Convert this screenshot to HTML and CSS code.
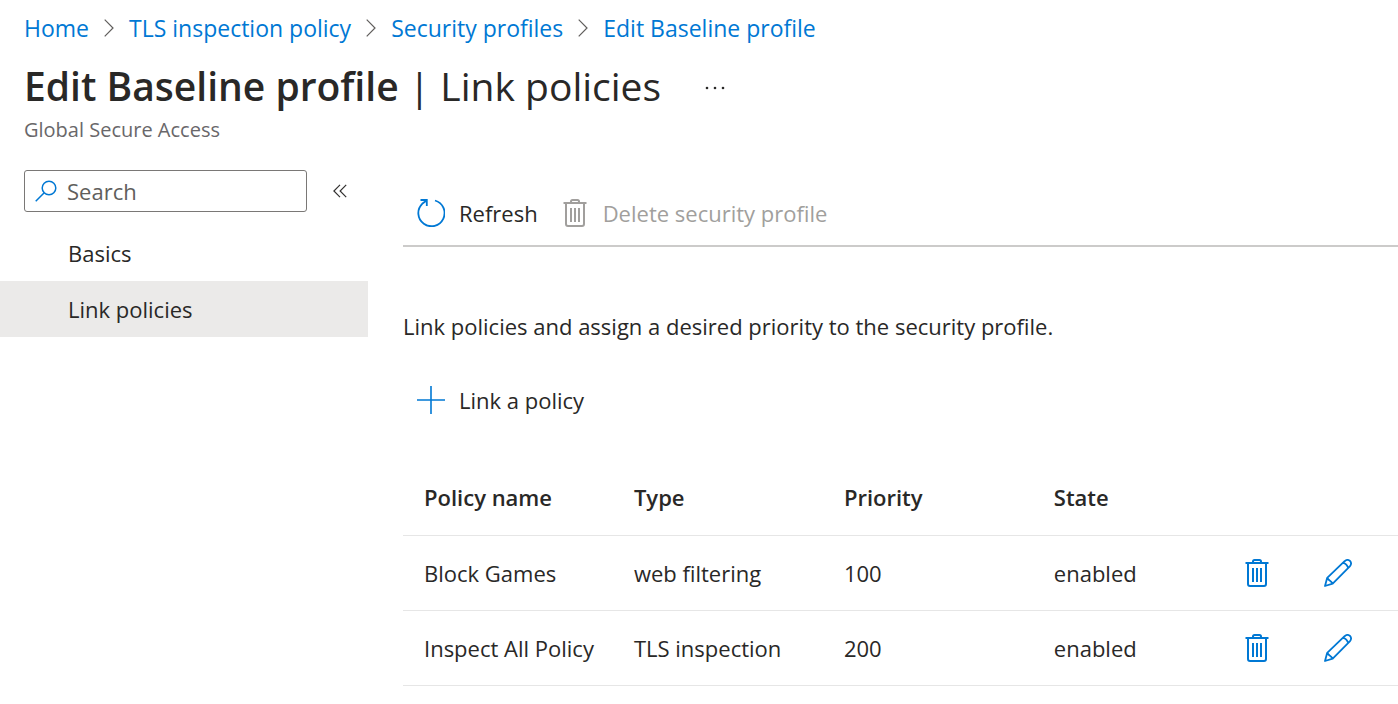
FILE: index.html
```html
<!DOCTYPE html>
<html lang="en">
<head>
<meta charset="utf-8">
<title>Edit Baseline profile | Link policies</title>
<link rel="stylesheet" href="styles.css">
</head>
<body>
<svg class="symbols" aria-hidden="true">
  <symbol id="chevron" viewBox="0 0 10 18"><path d="M.7 .7 9 9 .7 17.3" fill="none" stroke="currentColor" stroke-width="1.2"/></symbol>
  <symbol id="trash" viewBox="0 0 28 28">
    <g fill="none" stroke="currentColor">
      <path d="M2.500 4H25.500M10 3.500V2.500Q10 1 11.500 1H16.500Q18 1 18 2.500V3.500" stroke-width="2"/>
      <path d="M5 4V25Q5 27 7 27H21Q23 27 23 25V4" stroke-width="2"/>
      <path d="M10 9V23M14 9V23M18 9V23" stroke-width="2"/>
    </g>
  </symbol>
  <symbol id="pencil" viewBox="0 0 28 28">
    <path d="M1 27 3.200 18.800 20.600 2.200Q23.500 -.3 26.100 2Q28.200 4.500 25.800 7.400L8.700 24.600ZM3.200 18.800Q4.400 20.800 6 21.700Q7.700 22.800 8.700 24.600M19 3.800Q23 4.800 24.200 9" fill="none" stroke="currentColor" stroke-width="1.800" stroke-linejoin="round"/>
  </symbol>
</svg>
<header class="page-header">
  <nav class="breadcrumb" aria-label="Breadcrumb">
    <a href="#">Home</a>
    <svg class="chevron"><use href="#chevron"/></svg>
    <a href="#">TLS inspection policy</a>
    <svg class="chevron"><use href="#chevron"/></svg>
    <a href="#">Security profiles</a>
    <svg class="chevron"><use href="#chevron"/></svg>
    <a href="#">Edit Baseline profile</a>
  </nav>
  <div class="title-row">
    <h1 class="title"><strong>Edit Baseline profile</strong> | Link policies</h1>
    <button class="more" type="button" aria-label="More">
      <svg width="20" height="4" viewBox="0 0 20 4" fill="currentColor"><circle cx="2" cy="2" r="1.300"/><circle cx="10" cy="2" r="1.300"/><circle cx="18" cy="2" r="1.300"/></svg>
    </button>
  </div>
  <p class="subtitle">Global Secure Access</p>
</header>
<div class="layout">
  <aside class="sidebar">
    <div class="search-row">
      <div class="search">
        <svg width="22" height="22" viewBox="0 0 22 22" fill="none" stroke="currentColor" stroke-width="1.500"><circle cx="14" cy="8" r="6.800"/><path d="M9.200 12.800 .7 21.300"/></svg>
        <input class="search-input" type="text" placeholder="Search" aria-label="Search">
      </div>
      <button class="collapse" type="button" aria-label="Collapse menu">
        <svg width="14" height="14" viewBox="0 0 14 14" fill="none" stroke="currentColor" stroke-width="1.200"><path d="M7 .8 .9 7 7 13.200M13.200 .8 7.100 7 13.200 13.200"/></svg>
      </button>
    </div>
    <nav class="menu" aria-label="Profile">
      <a class="menu-item" href="#">Basics</a>
      <a class="menu-item selected" href="#" aria-current="page">Link policies</a>
    </nav>
  </aside>
  <main class="content">
    <div class="toolbar">
      <button class="command" type="button">
        <svg class="icon" viewBox="0 0 28 28" fill="none" stroke="currentColor" stroke-width="1.800"><path d="M18 1.500A13.100 13.100 0 1 1 5.200 4.800L9.600 1.500"/><path d="M3.500 1H9.800V7"/></svg>
        <span>Refresh</span>
      </button>
      <button class="command" type="button" disabled>
        <svg class="icon"><use href="#trash"/></svg>
        <span>Delete security profile</span>
      </button>
    </div>
    <p class="description">Link policies and assign a desired priority to the security profile.</p>
    <button class="command add" type="button">
      <svg class="icon" viewBox="0 0 28 28" fill="none" stroke="currentColor" stroke-width="1.600"><path d="M0 14H28M14 0V28"/></svg>
      <span>Link a policy</span>
    </button>
    <table class="policies">
      <colgroup><col class="col-data"><col class="col-data"><col class="col-data"><col class="col-data"><col class="col-action"><col></colgroup>
      <thead>
        <tr><th scope="col">Policy name</th><th scope="col">Type</th><th scope="col">Priority</th><th scope="col">State</th><td></td><td></td></tr>
      </thead>
      <tbody>
        <tr>
          <td>Block Games</td><td>web filtering</td><td>100</td><td>enabled</td>
          <td class="action"><button class="icon-button" type="button" aria-label="Delete Block Games"><svg class="icon"><use href="#trash"/></svg></button></td>
          <td class="action"><button class="icon-button" type="button" aria-label="Edit Block Games"><svg class="icon"><use href="#pencil"/></svg></button></td>
        </tr>
        <tr>
          <td>Inspect All Policy</td><td>TLS inspection</td><td>200</td><td>enabled</td>
          <td class="action"><button class="icon-button" type="button" aria-label="Delete Inspect All Policy"><svg class="icon"><use href="#trash"/></svg></button></td>
          <td class="action"><button class="icon-button" type="button" aria-label="Edit Inspect All Policy"><svg class="icon"><use href="#pencil"/></svg></button></td>
        </tr>
      </tbody>
    </table>
  </main>
</div>
</body>
</html>
```
FILE: styles.css
```css
* { box-sizing: border-box; }

body {
  margin: 0;
  background: #fff;
  color: #292827;
  font: 22px/32px "Open Sans", "Noto Sans", sans-serif;
}

button, input { font: inherit; color: inherit; }
button { padding: 0; border: 0; background: none; }
a { color: inherit; text-decoration: none; }
.symbols { display: none; }
.icon { width: 28px; height: 28px; flex: none; color: #0078d4; }

.page-header { padding: 12px 24px 0; }

.breadcrumb {
  display: flex;
  align-items: center;
  gap: 15px;
  font-size: 23px;
  color: #0078d4;
}
.chevron { width: 10px; height: 18px; color: #605e5c; }

.title-row { display: flex; align-items: center; gap: 44px; margin-top: 15px; }
.title { margin: 0; font-size: 39px; line-height: 54px; font-weight: 400; }
.title strong { font-weight: 600; }
.more { display: flex; padding-top: 4px; }
.subtitle { margin: 1px 0 0; font-size: 20px; color: #69676a; }

.layout { display: flex; }
.sidebar { width: 368px; flex: none; padding-top: 24px; }
.search-row { display: flex; align-items: center; gap: 26px; padding-left: 24px; }
.search {
  display: flex;
  align-items: center;
  gap: 10px;
  width: 283px;
  height: 42px;
  padding: 0 10px;
  border: 1px solid #7a7876;
  border-radius: 3px;
  color: #0078d4;
}
.search svg { flex: none; }
.search-input {
  flex: 1;
  min-width: 0;
  padding: 0;
  border: 0;
  outline: 0;
  background: none;
  color: #292827;
}
.search-input::placeholder { color: #605e5c; opacity: 1; }
.collapse { display: flex; color: #323130; }

.menu { margin-top: 13px; }
.menu-item { display: block; padding: 12px 24px 12px 68px; }
.selected { background: #ebeae9; }

.content { flex: 1; min-width: 0; margin-left: 35px; padding-top: 51px; }
.toolbar {
  display: flex;
  gap: 23px;
  padding: 0 14px 16px;
  border-bottom: 2px solid #cccbca;
}
.command { display: flex; align-items: center; gap: 14px; }
.command:disabled, .command:disabled .icon { color: #a19f9d; }
.description { margin: 63px 0 42px; }
.add { margin-left: 14px; }

.policies {
  width: 100%;
  margin-top: 44px;
  table-layout: fixed;
  border-collapse: collapse;
}
.col-data { width: 21.1%; }
.col-action { width: 8.2%; }
.policies th, .policies td {
  height: 75px;
  padding: 0 0 0 21px;
  border-bottom: 1px solid #e6e6e6;
  text-align: left;
  font-weight: 400;
  white-space: nowrap;
}
.policies th { font-weight: 600; }
.policies .action { padding: 0; }
.icon-button { display: flex; }
```
